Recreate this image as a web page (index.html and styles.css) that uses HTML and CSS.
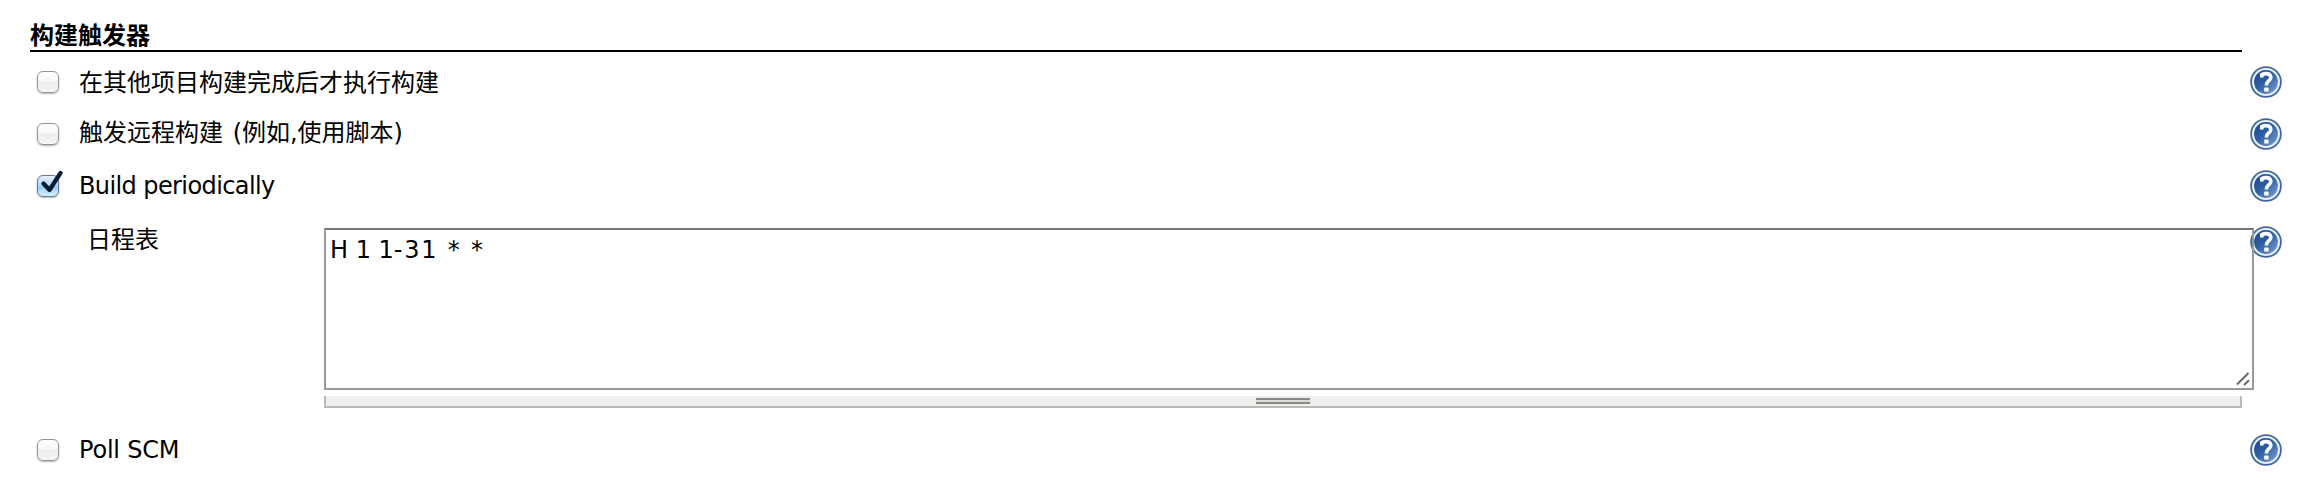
FILE: index.html
```
<!DOCTYPE html>
<html lang="zh-CN">
<head>
<meta charset="utf-8">
<title>构建触发器</title>
<link rel="stylesheet" href="styles.css">
</head>
<body>
<svg class="defs" width="0" height="0" aria-hidden="true">
  <defs>
    <linearGradient id="disc" x1="0" y1="0" x2="1" y2="1">
      <stop offset="0" stop-color="#174a91"/>
      <stop offset=".45" stop-color="#2f5fa3"/>
      <stop offset="1" stop-color="#7fa3d3"/>
    </linearGradient>
    <symbol id="help" viewBox="0 0 32 32">
      <circle cx="16" cy="16" r="15.8" fill="#41699f"/>
      <circle cx="16" cy="16" r="14" fill="#e9eff7"/>
      <circle cx="16" cy="16" r="11.9" fill="url(#disc)"/>
      <path d="M11.8 11.6V8.6Q13.8 7.6 16 7.6Q20.8 7.6 20.8 11.4Q20.8 13.6 18.4 15.2Q16.4 16.6 16.4 19.4" fill="none" stroke="#fff" stroke-width="3.6"/>
      <rect x="14.2" y="21.4" width="4.4" height="4.2" rx=".6" fill="#fff"/>
    </symbol>
  </defs>
</svg>
<form class="triggers">
  <h1 class="title">构建触发器</h1>
  <div class="row">
    <span class="check"></span>
    <span class="label">在其他项目构建完成后才执行构建</span>
    <svg class="help"><use href="#help"/></svg>
  </div>
  <div class="row">
    <span class="check"></span>
    <span class="label mixed">触发远程构建 (例如,使用脚本)</span>
    <svg class="help"><use href="#help"/></svg>
  </div>
  <div class="row">
    <span class="check checked"><svg class="tick" viewBox="0 0 24 26"><path d="M4.5 13.5L10.5 20L21.5 3" fill="none" stroke="#041c33" stroke-width="4.2" stroke-linecap="round" stroke-linejoin="round"/></svg></span>
    <span class="label latin">Build periodically</span>
    <svg class="help"><use href="#help"/></svg>
  </div>
  <div class="schedule">
    <span class="schedule-label">日程表</span>
    <div class="editor">
      <div class="spec">H 1 1<span class="wide">-31 * *</span><svg class="resizer" viewBox="0 0 14 14"><path d="M1 12.5L12.5 1M8 13L13 8.2" fill="none" stroke="#666" stroke-width="2"/></svg></div>
      <div class="handle"><span class="grip"></span></div>
    </div>
    <svg class="help"><use href="#help"/></svg>
  </div>
  <div class="row">
    <span class="check"></span>
    <span class="label latin poll">Poll SCM</span>
    <svg class="help"><use href="#help"/></svg>
  </div>
</form>
</body>
</html>
```
FILE: styles.css
```
* { box-sizing: border-box; }
body {
  margin: 0;
  background: #fff;
  color: #000;
  font: 24px/32px "DejaVu Sans", "Noto Sans CJK SC", sans-serif;
}
.defs { display: block; }
.triggers { padding: 18px 18px 0 30px; }
.title {
  margin: 0 40px 4px 0;
  height: 34px;
  border-bottom: 2px solid #000;
  font: bold 24px/32px "Noto Sans CJK SC", sans-serif;
}
.row {
  display: flex;
  align-items: center;
  height: 52px;
  padding-left: 7px;
}
.check {
  position: relative;
  flex: none;
  width: 22px;
  height: 22px;
  border: 1.5px solid #949494;
  border-radius: 6px;
  background: linear-gradient(#fff 0, #f8f8f8 45%, #ebebeb 50%, #f6f6f6 100%);
  box-shadow: 0 1px 2px rgba(0, 0, 0, .3);
}
.checked {
  border-color: #6c7890;
  background: linear-gradient(#e2f0fd 0, #b9dcf9 45%, #94c9f5 50%, #d3f2ff 100%);
}
.tick {
  position: absolute;
  left: 1px;
  top: -6px;
  width: 24px;
  height: 26px;
}
.label {
  flex: 1;
  margin-left: 20px;
  padding-bottom: 3px;
  white-space: nowrap;
  font-family: "Noto Sans CJK SC", sans-serif;
}
.mixed {
  font-family: "DejaVu Sans", "Noto Sans CJK SC", sans-serif;
  word-spacing: 2px;
}
.latin {
  padding-bottom: 0;
  font-family: "DejaVu Sans", sans-serif;
  letter-spacing: -.6px;
}
.poll { letter-spacing: -.2px; }
.help { flex: none; width: 32px; height: 32px; }
.schedule {
  display: flex;
  align-items: flex-start;
  height: 212px;
  padding-top: 14px;
}
.schedule-label {
  flex: none;
  width: 294px;
  margin-top: -4px;
  padding-left: 57px;
  font-family: "Noto Sans CJK SC", sans-serif;
}
.editor { flex: 1; padding-top: 2px; }
.spec {
  position: relative;
  height: 162px;
  margin-right: -4px;
  padding: 4px;
  border: 2px solid #999;
  border-top-color: #777;
}
.wide { letter-spacing: 1.8px; }
.resizer { position: absolute; right: 2px; bottom: 2px; width: 14px; height: 14px; }
.handle {
  display: flex;
  justify-content: center;
  height: 12px;
  margin: 6px 8px 0 0;
  padding-top: 2px;
  border: 2px solid #bbbbb5;
  border-top: 0;
  background: #eee;
}
.grip {
  width: 54px;
  height: 6px;
  border: solid #888884;
  border-width: 2px 0;
  background: #deded8;
}
```
